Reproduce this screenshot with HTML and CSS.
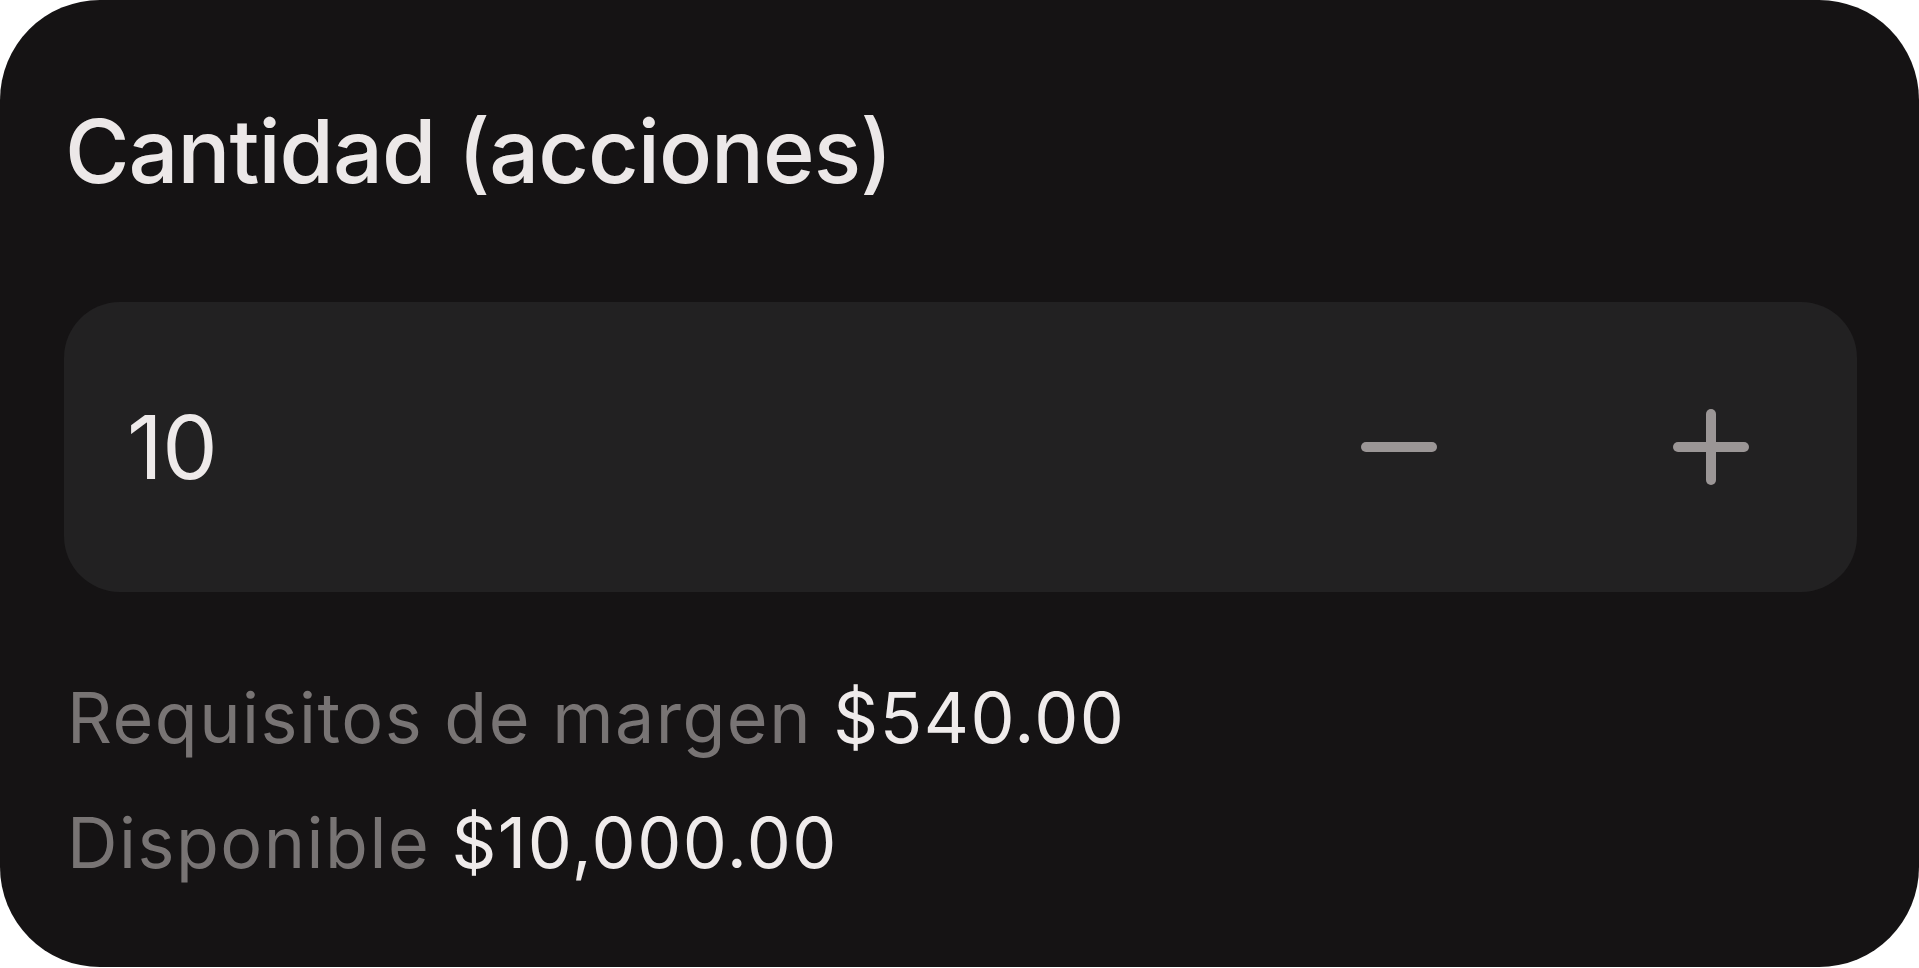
FILE: index.html
```html
<!DOCTYPE html>
<html lang="es">
<head>
    <meta charset="UTF-8">
    <meta name="viewport" content="width=device-width, initial-scale=1.0">
    <title>Cantidad</title>
    <link rel="stylesheet" href="styles.css">
</head>
<body>

<div class="order-card">
    <div class="field-label">Cantidad (acciones)</div>

    <div class="qty-box">
        <div class="qty-value">10</div>
        <button class="qty-button" aria-label="Restar">
            <svg width="76" height="76" viewBox="0 0 76 76">
                <line x1="5" y1="38" x2="71" y2="38" />
            </svg>
        </button>
        <button class="qty-button" aria-label="Sumar">
            <svg width="76" height="76" viewBox="0 0 76 76">
                <line x1="5" y1="38" x2="71" y2="38" />
                <line x1="38" y1="5" x2="38" y2="71" />
            </svg>
        </button>
    </div>

    <div class="info-row"><span class="info-label">Requisitos de margen</span> <span class="info-value">$540.00</span></div>
    <div class="info-row"><span class="info-label">Disponible</span> <span class="info-value">$10,000.00</span></div>
</div>

</body>
</html>
```

FILE: styles.css
```css
body {
    margin: 0;
    background: #ffffff;
    font-family: 'Inter', 'Noto Sans', sans-serif;
}

.order-card {
    height: 967px;
    box-sizing: border-box;
    padding: 98px 62px 0 65px;
    background: #151314;
    border-radius: 100px;
    overflow: hidden;
}

.field-label {
    font-size: 88px;
    line-height: 106px;
    font-weight: 500;
    color: #ece8e8;
    letter-spacing: -1px;
}

.qty-box {
    display: flex;
    align-items: center;
    height: 290px;
    margin-top: 98px;
    margin-left: -1px;
    padding: 0 108px 0 63px;
    background: #222122;
    border-radius: 56px;
}

.qty-value {
    flex: 1;
    font-size: 88px;
    line-height: 106px;
    color: #eeeaea;
    letter-spacing: -0.5px;
}

.qty-button {
    width: 76px;
    height: 76px;
    padding: 0;
    border: none;
    background: none;
    cursor: pointer;
}

.qty-button + .qty-button {
    margin-left: 236px;
}

.qty-button svg {
    display: block;
    stroke: #9b9696;
    stroke-width: 10;
    stroke-linecap: round;
}

.info-row {
    font-size: 70px;
    line-height: 125px;
    padding-left: 2px;
    letter-spacing: 1.5px;
}

.qty-box + .info-row {
    margin-top: 63px;
}

.info-label {
    color: #787474;
}

.info-value {
    color: #efebeb;
}
```
